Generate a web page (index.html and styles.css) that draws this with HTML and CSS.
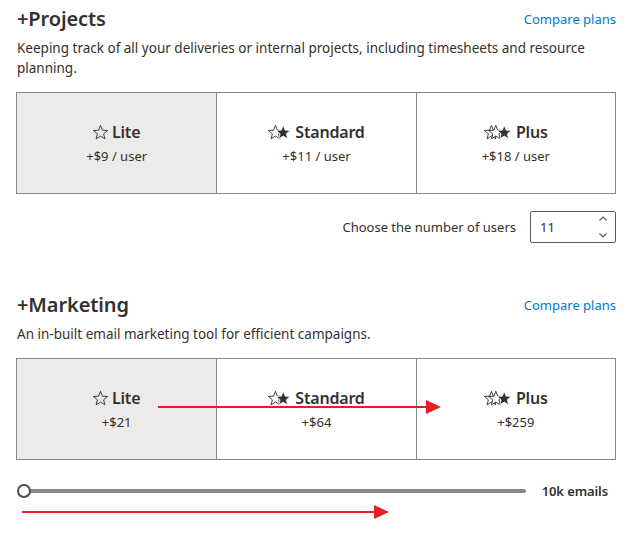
FILE: index.html
```html
<!DOCTYPE html>
<html lang="en">
<head>
<meta charset="utf-8">
<title>Add-ons</title>
<link rel="stylesheet" href="styles.css">
</head>
<body>
<svg width="0" height="0" class="defs">
  <defs>
    <path id="star" d="M12 0.5L15.06 8.29L23.41 8.79L16.95 14.11L19.05 22.21L12 17.7L4.95 22.21L7.05 14.11L0.59 8.79L8.94 8.29Z"/>
  </defs>
</svg>
<div class="page">
  <section class="addon">
    <div class="head">
      <h2>+Projects</h2>
      <a class="compare" href="#">Compare plans</a>
    </div>
    <p class="desc">Keeping track of all your deliveries or internal projects, including timesheets and resource planning.</p>
    <div class="plans">
      <div class="plan selected">
        <div class="plan-name">
          <svg class="stars s1" viewBox="0 0 24 24"><use href="#star" class="outline"/></svg>
          <span>Lite</span>
        </div>
        <div class="price">+$9 / user</div>
      </div>
      <div class="plan">
        <div class="plan-name">
          <svg class="stars s2" viewBox="0 0 37 24"><use href="#star" class="outline"/><use href="#star" class="filled" transform="translate(12.5 0)"/></svg>
          <span>Standard</span>
        </div>
        <div class="price">+$11 / user</div>
      </div>
      <div class="plan">
        <div class="plan-name">
          <svg class="stars s3" viewBox="0 0 45 24"><use href="#star" class="outline"/><use href="#star" class="outline" transform="translate(7 0)"/><use href="#star" class="filled" transform="translate(20.5 0)"/></svg>
          <span>Plus</span>
        </div>
        <div class="price">+$18 / user</div>
      </div>
    </div>
    <div class="users">
      <span>Choose the number of users</span>
      <div class="num">
        <span class="num-value">11</span>
        <svg class="spin" viewBox="0 0 10 26"><path d="M1.5 6.5L5 3l3.5 3.5M1.5 19.5L5 23l3.5-3.5"/></svg>
      </div>
    </div>
  </section>

  <section class="addon marketing">
    <div class="head">
      <h2>+Marketing</h2>
      <a class="compare" href="#">Compare plans</a>
    </div>
    <p class="desc">An in-built email marketing tool for efficient campaigns.</p>
    <div class="plans">
      <div class="plan selected">
        <div class="plan-name">
          <svg class="stars s1" viewBox="0 0 24 24"><use href="#star" class="outline"/></svg>
          <span>Lite</span>
        </div>
        <div class="price">+$21</div>
      </div>
      <div class="plan">
        <div class="plan-name">
          <svg class="stars s2" viewBox="0 0 37 24"><use href="#star" class="outline"/><use href="#star" class="filled" transform="translate(12.5 0)"/></svg>
          <span>Standard</span>
        </div>
        <div class="price">+$64</div>
      </div>
      <div class="plan">
        <div class="plan-name">
          <svg class="stars s3" viewBox="0 0 45 24"><use href="#star" class="outline"/><use href="#star" class="outline" transform="translate(7 0)"/><use href="#star" class="filled" transform="translate(20.5 0)"/></svg>
          <span>Plus</span>
        </div>
        <div class="price">+$259</div>
      </div>
    </div>
    <div class="slider-row">
      <div class="slider">
        <div class="track"></div>
        <div class="thumb"></div>
      </div>
      <span class="slider-label">10k emails</span>
    </div>
  </section>

  <svg class="annotations" viewBox="0 0 644 539">
    <line x1="158" y1="407" x2="428" y2="407"/>
    <polygon points="426,400 441,407 426,414"/>
    <line x1="22" y1="512" x2="376" y2="512"/>
    <polygon points="374,505 389,512 374,519"/>
  </svg>
</div>
</body>
</html>
```

FILE: styles.css
```css
html, body {
  margin: 0;
  padding: 0;
  background: #ffffff;
}

body {
  font-family: "Noto Sans", "Open Sans", "DejaVu Sans", sans-serif;
  color: #323130;
}

.defs {
  position: absolute;
  width: 0;
  height: 0;
}

.page {
  position: relative;
  width: 644px;
  height: 539px;
  box-sizing: border-box;
  padding: 5px 28px 0 16px;
  overflow: hidden;
}

.head {
  display: flex;
  justify-content: space-between;
  align-items: center;
  height: 28px;
}

.head h2 {
  margin: 0 0 0 1px;
  font-size: 20px;
  font-weight: 600;
  line-height: 28px;
  letter-spacing: -0.1px;
}

.compare {
  font-size: 13px;
  color: #0078d4;
  text-decoration: none;
}

.desc {
  margin: 5px 0 0 1px;
  font-size: 13.5px;
  line-height: 20px;
}

.plans {
  margin-top: 14px;
  display: grid;
  grid-template-columns: repeat(3, 1fr);
  height: 102px;
  box-sizing: border-box;
  border: 1px solid #8a8886;
}

.plan {
  display: flex;
  flex-direction: column;
  align-items: center;
  justify-content: center;
  border-left: 1px solid #8a8886;
}

.plan:first-child {
  border-left: 0;
}

.plan.selected {
  background: #edebe9;
}

.plan-name {
  display: flex;
  align-items: center;
  gap: 4px;
  font-size: 16px;
  font-weight: 600;
  line-height: 22px;
  letter-spacing: -0.2px;
}

.stars {
  height: 15px;
  display: block;
  overflow: visible;
}

.stars.s1 { width: 15px; }
.stars.s2 { width: 23px; }
.stars.s3 { width: 28px; }

.stars .outline {
  fill: #ffffff;
  stroke: #323130;
  stroke-width: 1.5;
  stroke-linejoin: round;
}

.plan.selected .stars .outline {
  fill: #edebe9;
}

.stars .filled {
  fill: #323130;
  stroke: #ffffff;
  stroke-width: 1.2;
  stroke-linejoin: round;
}

.price {
  margin-top: 4px;
  font-size: 13px;
  line-height: 18px;
}

.users {
  display: flex;
  justify-content: flex-end;
  align-items: center;
  gap: 14px;
  margin-top: 17px;
  font-size: 13px;
}

.num {
  width: 86px;
  height: 32px;
  box-sizing: border-box;
  border: 1px solid #605e5c;
  border-radius: 2px;
  display: flex;
  align-items: center;
  justify-content: space-between;
  padding: 0 7px 0 9px;
}

.num-value {
  font-size: 13px;
}

.spin {
  width: 10px;
  height: 26px;
  display: block;
}

.spin path {
  fill: none;
  stroke: #605e5c;
  stroke-width: 1.2;
}

.marketing {
  margin-top: 48px;
}

.slider-row {
  display: flex;
  align-items: center;
  gap: 9px;
  margin-top: 22px;
  padding: 0 8px 0 1px;
}

.slider {
  position: relative;
  flex: 1;
  height: 14px;
}

.track {
  position: absolute;
  left: 7px;
  right: 7px;
  top: 5px;
  height: 4px;
  border-radius: 2px;
  background: #8a8886;
}

.thumb {
  position: absolute;
  left: 0;
  top: 0;
  width: 14px;
  height: 14px;
  box-sizing: border-box;
  border: 2px solid #4f4d4b;
  border-radius: 50%;
  background: #ffffff;
}

.slider-label {
  font-size: 13px;
  font-weight: 600;
  letter-spacing: -0.1px;
}

.annotations {
  position: absolute;
  left: 0;
  top: 0;
  width: 644px;
  height: 539px;
  pointer-events: none;
}

.annotations line {
  stroke: #e81e25;
  stroke-width: 2;
}

.annotations polygon {
  fill: #e81e25;
}
```
